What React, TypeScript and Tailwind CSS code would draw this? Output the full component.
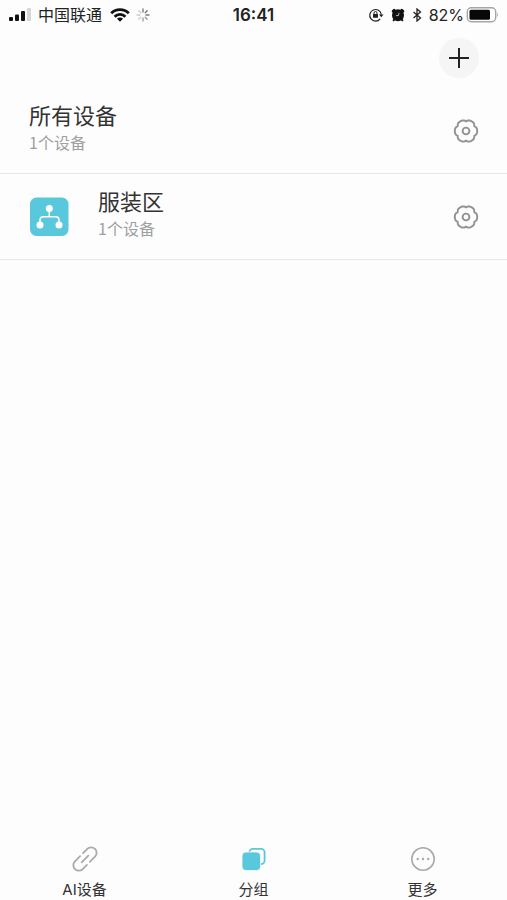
import type { ReactNode } from "react";

type Group = {
    name: string;
    count: number;
    icon?: ReactNode;
};

type Tab = {
    label: string;
    icon: ReactNode;
    active?: boolean;
};

// Outline of the six-lobed settings gear, wide lobes with narrow dips between
const gearOutline = Array.from({ length: 72 }, (_, i) => {
    const angle = (i * Math.PI) / 36;
    const wave = Math.min(1, Math.sqrt(Math.cos(3 * angle) ** 2 + 0.02));
    const radius = 9 + 2.2 * (1 - (1 - wave) ** 2);

    return `${(13 + radius * Math.cos(angle)).toFixed(2)},${(13 + radius * Math.sin(angle)).toFixed(2)}`;
}).join(" ");

function GearIcon() {
    return (
        <svg viewBox="0 0 26 26" fill="none" stroke="#929292" strokeWidth="1.9" className="size-[26px]" aria-hidden="true">
            <polygon points={gearOutline} strokeLinejoin="round" />
            <circle cx="13" cy="13" r="3.4" />
        </svg>
    );
}

function TreeIcon() {
    return (
        <svg viewBox="0 0 40 40" className="size-10" aria-hidden="true">
            <rect x="1" y="0.5" width="38.5" height="38.5" rx="6.5" fill="#59c8dc" />
            <g fill="#fff">
                <circle cx="20.3" cy="11.5" r="3.5" />
                <circle cx="11" cy="28" r="3.5" />
                <circle cx="30" cy="28" r="3.5" />
            </g>
            <path d="M20.3 12v7.7M11 28v-5q0-3.3 3.3-3.3h12.4q3.3 0 3.3 3.3v5" fill="none" stroke="#fff" strokeWidth="1.5" />
        </svg>
    );
}

function SignalIcon() {
    return (
        <svg viewBox="0 0 24 16" className="h-4 w-6" aria-hidden="true">
            <rect x="1" y="10" width="4" height="4" rx="1" fill="#111" />
            <rect x="7" y="7.5" width="4" height="6.5" rx="1" fill="#111" />
            <rect x="13" y="4" width="4" height="10" rx="1" fill="#111" />
            <rect x="19" y="1" width="4" height="13" rx="1" fill="#d6d6d6" />
        </svg>
    );
}

function WifiIcon() {
    return (
        <svg viewBox="0 0 20 16" className="h-4 w-5" fill="none" stroke="#111" strokeWidth="2.8" aria-hidden="true">
            <path d="M1.2 6.2a12.4 12.4 0 0 1 17.6 0" />
            <path d="M4.6 9.7a7.6 7.6 0 0 1 10.8 0" />
            <path d="M10 14.8 7 11.8a4.2 4.2 0 0 1 6 0Z" fill="#111" stroke="none" />
        </svg>
    );
}

function SpinnerIcon() {
    return (
        <svg viewBox="0 0 14 14" className="size-3.5" fill="none" strokeWidth="1.3" strokeLinecap="round" aria-hidden="true">
            <path d="M7 1v3M11.2 2.8 9.2 4.8M13 7h-3" stroke="#777" />
            <path d="m11.2 11.2-2-2M7 13v-3" stroke="#999" />
            <path d="m2.8 11.2 2-2M1 7h3M2.8 2.8l2 2" stroke="#ccc" />
        </svg>
    );
}

function RotationLockIcon() {
    return (
        <svg viewBox="0 0 16 16" className="size-4" fill="none" stroke="#222" strokeWidth="1.2" aria-hidden="true">
            <path d="M12.2 11.8A5.8 5.8 0 1 1 13.3 7.6" />
            <path d="M11 7.4h4.6l-2.3 2.8Z" fill="#222" stroke="none" />
            <rect x="5" y="7" width="5" height="3.8" rx="0.5" fill="#222" stroke="none" />
            <path d="M6 7.4V6a1.5 1.5 0 0 1 3 0v1.4" strokeWidth="1" />
        </svg>
    );
}

function AlarmIcon() {
    return (
        <svg viewBox="0 0 14 14" className="size-3.5" aria-hidden="true">
            <circle cx="7" cy="7.2" r="6" fill="#111" />
            <path d="M3.2 2.3 2.2 3.3M10.8 2.3l1 1" stroke="#111" strokeWidth="3" strokeLinecap="round" />
            <path d="m3.4 11.4-.8.9M10.6 11.4l.8.9" stroke="#111" strokeWidth="2" strokeLinecap="round" />
            <path d="M8 4.8 7.4 7.6H5" fill="none" stroke="#ddd" strokeWidth="0.8" />
        </svg>
    );
}

function BluetoothIcon() {
    return (
        <svg viewBox="0 0 10 14" className="h-3.5 w-2.5" fill="none" stroke="#222" strokeWidth="1.3" aria-hidden="true">
            <path d="m1.5 4 7 6L5 13V1l3.5 3-7 6" />
        </svg>
    );
}

function BatteryIcon() {
    return (
        <svg viewBox="0 0 33 16" className="h-4 w-[33px]" aria-hidden="true">
            <rect x="1.3" y="0.8" width="28.4" height="13.9" rx="4" fill="none" stroke="#a5a5a5" strokeWidth="1.4" />
            <rect x="3.5" y="2.8" width="20.5" height="9.9" rx="1.5" fill="#080808" />
            <path d="M31.2 5.3q1.8 2.5 0 5Z" fill="#a5a5a5" />
        </svg>
    );
}

function LinkIcon() {
    return (
        <svg viewBox="0 0 28 28" className="size-7" fill="none" stroke="#aaa" strokeWidth="1.8" strokeLinecap="round" aria-hidden="true">
            <g transform="rotate(-45 14 14)">
                <path d="M9.3 14h9.4" />
                <path d="M16.8 8.5h5.9a5.5 5.5 0 0 1 0 11h-7.3" />
                <path d="M11.2 19.5H5.3a5.5 5.5 0 0 1 0-11h7.3" />
            </g>
        </svg>
    );
}

function StackIcon() {
    return (
        <svg viewBox="0 0 28 28" className="size-7" aria-hidden="true">
            <rect x="9.4" y="3.9" width="15.2" height="15.2" rx="3.5" fill="none" stroke="#59c8dc" strokeWidth="1.8" />
            <rect x="2" y="7" width="18.6" height="18.6" rx="4" fill="#59c8dc" stroke="#fdfdfd" strokeWidth="0.8" />
        </svg>
    );
}

function MoreIcon() {
    return (
        <svg viewBox="0 0 28 28" className="size-7" aria-hidden="true">
            <circle cx="14" cy="14" r="11.2" fill="none" stroke="#aaa" strokeWidth="1.6" />
            <g fill="#aaa">
                <circle cx="8.7" cy="14" r="1.2" />
                <circle cx="14" cy="14" r="1.2" />
                <circle cx="19.3" cy="14" r="1.2" />
            </g>
        </svg>
    );
}

const groups: Group[] = [
    { name: "所有设备", count: 1 },
    { name: "服装区", count: 1, icon: <TreeIcon /> },
];

const tabs: Tab[] = [
    { label: "AI设备", icon: <LinkIcon /> },
    { label: "分组", icon: <StackIcon />, active: true },
    { label: "更多", icon: <MoreIcon /> },
];

function StatusBar() {
    return (
        <div className="grid h-[30px] grid-cols-[1fr_auto_1fr] items-center px-2 text-base text-[#222]">
            <div className="flex items-center gap-1.5">
                <SignalIcon />
                <span>中国联通</span>
                <div className="flex items-center gap-1.5 pl-0.5">
                    <WifiIcon />
                    <SpinnerIcon />
                </div>
            </div>
            <time className="text-[17px] leading-[25px] font-semibold">16:41</time>
            <div className="flex items-center justify-end gap-[7px]">
                <RotationLockIcon />
                <AlarmIcon />
                <BluetoothIcon />
                <div className="flex items-center gap-0.5">
                    <span>82%</span>
                    <BatteryIcon />
                </div>
            </div>
        </div>
    );
}

function GroupRow({ name, count, icon }: Group) {
    return (
        <li className="flex items-center border-b border-[#e8e8e8] py-[13px] pr-7 pl-[29px]">
            {icon && <span className="mr-[29px] shrink-0">{icon}</span>}
            <div className="flex-1 pb-1.5">
                <h2 className="text-[22px] leading-[30px] text-[#333]">{name}</h2>
                <p className="font-['Noto_Sans_CJK_SC',sans-serif] text-base leading-[23px] text-[#a0a0a0]">
                    {count}个设备
                </p>
            </div>
            <button type="button" aria-label={`${name}设置`}>
                <GearIcon />
            </button>
        </li>
    );
}

export default function App() {
    return (
        <div className="flex min-h-screen flex-col bg-[#fdfdfd] font-[Inter,'Noto_Sans_CJK_SC',sans-serif]">
            <StatusBar />

            <header className="flex h-[58px] justify-end pt-2 pr-7">
                <button
                    type="button"
                    aria-label="添加分组"
                    className="flex size-10 items-center justify-center rounded-full bg-[#f5f5f5]"
                >
                    <svg viewBox="0 0 20 20" className="size-5" stroke="#222" strokeWidth="2" aria-hidden="true">
                        <path d="M10 0v20M0 10h20" />
                    </svg>
                </button>
            </header>

            <main className="flex-1">
                <ul>
                    {groups.map((group) => (
                        <GroupRow key={group.name} {...group} />
                    ))}
                </ul>
            </main>

            <nav className="grid grid-cols-3">
                {tabs.map((tab) => (
                    <a
                        key={tab.label}
                        href="#"
                        aria-current={tab.active ? "page" : undefined}
                        className="flex flex-col items-center gap-[7px] text-[15px] leading-5 text-[#333]"
                    >
                        {tab.icon}
                        {tab.label}
                    </a>
                ))}
            </nav>
        </div>
    );
}
